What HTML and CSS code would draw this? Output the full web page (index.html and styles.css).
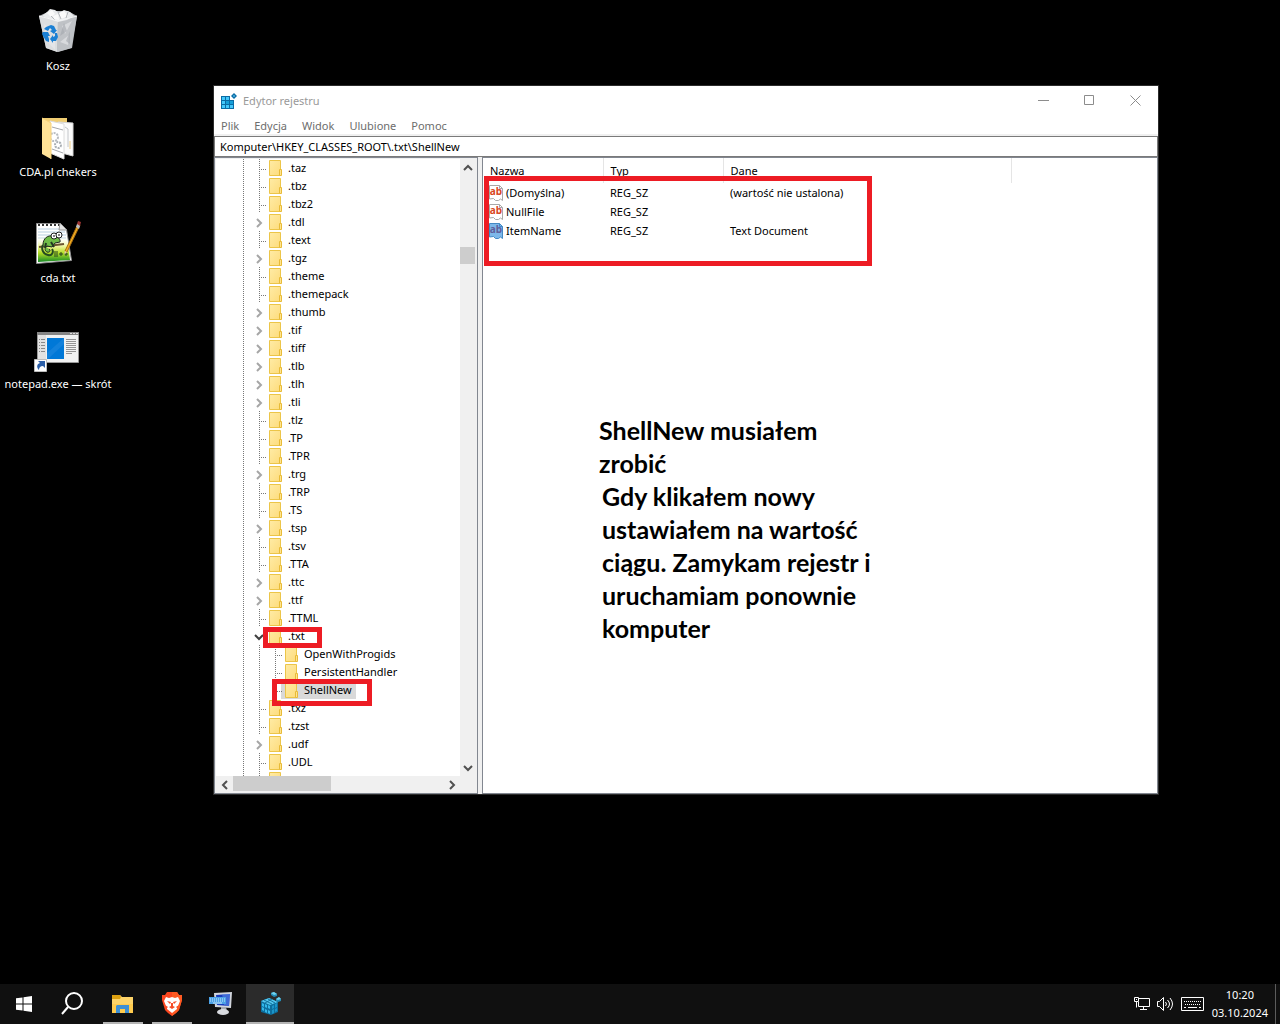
FILE: index.html
```
<!DOCTYPE html>
<html lang="pl">
<head>
  <meta charset="UTF-8" />
  <meta name="viewport" content="width=device-width, initial-scale=1.0"/>
  <title>Edytor rejestru</title>
  <link rel="stylesheet" href="styles.css">
</head>
<body>
  <!-- shared icons -->
  <svg class="sprite" aria-hidden="true">
    <defs>
      <linearGradient id="folderFill" x1="0" y1="0" x2="1" y2="1">
        <stop offset="0" stop-color="#ffeba6"/>
        <stop offset="1" stop-color="#fddc7c"/>
      </linearGradient>
      <symbol id="folder" viewBox="0 0 13 16">
        <path d="M.5 .5h11v15H.5z" fill="url(#folderFill)" stroke="#ecc548"/>
        <path d="M10.5 9.500h2v6h-2z" fill="#ffe48f" stroke="#e8bb38"/>
      </symbol>
      <symbol id="chev-right" viewBox="0 0 8 10">
        <path d="M2 1l4 4-4 4" fill="none" stroke="currentColor" stroke-width="2"/>
      </symbol>
      <symbol id="chev-left" viewBox="0 0 8 10">
        <path d="M6 1L2 5l4 4" fill="none" stroke="currentColor" stroke-width="2"/>
      </symbol>
      <symbol id="chev-down" viewBox="0 0 10 8">
        <path d="M1 2l4 4 4-4" fill="none" stroke="currentColor" stroke-width="2"/>
      </symbol>
      <symbol id="chev-up" viewBox="0 0 10 8">
        <path d="M1 6l4-4 4 4" fill="none" stroke="currentColor" stroke-width="2"/>
      </symbol>
      <symbol id="page" viewBox="0 0 16 16">
        <path d="M1.500.5h10l3 3v12l-2-1.500-2 1.500h-3l-2-2-4 .5z" fill="#fff" stroke="#a8a8a8"/>
        <path d="M11.500.5v3h3" fill="none" stroke="#a8a8a8"/>
      </symbol>
      <symbol id="page-selected" viewBox="0 0 16 16">
        <path d="M1.500.5h10l3 3v12l-2-1.500-2 1.500h-3l-2-2-4 .5z" fill="#7db8ea" stroke="#4389c4"/>
        <path d="M11.500.5v3h3" fill="none" stroke="#4389c4"/>
      </symbol>
    </defs>
  </svg>

  <main class="desktop">
    <div class="shortcuts">
      <button class="shortcut">
        <svg width="48" height="48" viewBox="0 0 48 48">
          <path d="M5 9L16 4h18l9 5-5 32-14 4-12-4z" fill="#b9bcc0"/>
          <path d="M5 9l19 5-1 31-11-4z" fill="#dcdee0"/>
          <path d="M24 14l19-5-6 32-14 4z" fill="#bfc2c6"/>
          <path d="M8 9l5-4 3-3 5 1 4 3 5-3 6 2 4 4-7 4-9 2z" fill="#e9ebed"/>
          <path d="M13 6l5-3 3 4-4 3zM25 6l5-2 4 5-7 3zM19 9l5-2 1 6-5-1z" fill="#fafafa"/>
          <path d="M17 9l4 4M24 5l3 7M34 5l-2 6" stroke="#b4b7bb" fill="none"/>
          <path d="M10 17l8 5-7 7zM13 34l8-4v13zM28 19l10-5-7 13zM26 35l9-7-1 10z" fill="#e9eaec" opacity=".6"/>
          <path d="M30 16l3 8-7 5zM36 24l-4 10 4 3z" fill="#a3a7ad" opacity=".6"/>
          <path d="M5 9l19 5 19-5" stroke="#f4f5f6" fill="none"/>
          <g fill="#1b80d4">
            <path d="M12 20l5-2 3 1 2 4 1 0-3 4-4-3 2-1-2-2-2 3-4-2z"/>
            <path d="M21 26l2 0 1 4-2 4-3 0 0 2-3-4 3-4 0 2 2-1z"/>
            <path d="M9 25l5 0 2 4-2 0 1 3 0 3-3-1-3-5-1-2z"/>
          </g>
        </svg>
        <span>Kosz</span>
      </button>
      <button class="shortcut">
        <svg width="48" height="48" viewBox="0 0 48 48">
          <path d="M8 5h25v36H8z" fill="#f0cd72"/>
          <path d="M24 9l15 1v33l-15-4z" fill="#fbfbfb" stroke="#d5d5d5"/>
          <path d="M31 14l3 2v18" fill="none" stroke="#c3c6ca"/>
          <path d="M16 8l14 3v35l-14-6z" fill="#fff" stroke="#dcdcdc"/>
          <path d="M18 14l11 3M18 36l11 4" stroke="#a4a6aa"/>
          <circle cx="20" cy="24" r="4" fill="none" stroke="#b8bcc0" stroke-width="2" stroke-dasharray="2 1"/>
          <circle cx="24" cy="32" r="3" fill="none" stroke="#aaafb4" stroke-width="2" stroke-dasharray="2 1"/>
          <path d="M8 5l9 5v36l-9-5z" fill="#ffe297"/>
          <path d="M8 5l9 5v36" fill="none" stroke="#f7d37c"/>
          <path d="M36 28v8" stroke="#f1ce83"/>
        </svg>
        <span>CDA.pl chekers</span>
      </button>
      <button class="shortcut">
        <svg width="48" height="48" viewBox="0 0 48 48">
          <defs>
            <linearGradient id="grass" x1="0" y1="0" x2="0" y2="1">
              <stop offset="0" stop-color="#fff" stop-opacity="0"/>
              <stop offset=".4" stop-color="#eef59a"/>
              <stop offset=".65" stop-color="#b4de26"/>
              <stop offset="1" stop-color="#168a26"/>
            </linearGradient>
          </defs>
          <path d="M2.500 4.500h24l6 6 5 31-35 3z" fill="#fff" stroke="#8e8e8e"/>
          <path d="M4 10h24M4 13h27M4 16h28M4 19h28" stroke="#b9cfe0"/>
          <path d="M4 17h29l3 24-32 2z" fill="url(#grass)"/>
          <path d="M4 6h22" stroke="#333" stroke-width="2" stroke-dasharray="2 2"/>
          <path d="M26 4l-1 7 8 0z" fill="#e5e5e5" stroke="#999"/>
          <path d="M5 28l25-3" stroke="#6c5530" stroke-width="2"/>
          <path d="M9 26c0-7 5-10 10-9 4 0 8 3 7 6l-5 1-3 4-5-1c-3 2-2 5 0 6 3 1 4-2 2-3" fill="#70bd48" stroke="#202820"/>
          <path d="M9 26c-2 4 0 9 5 10 4 1 6-3 4-6" fill="none" stroke="#244a20" stroke-width="2"/>
          <path d="M17 23l3 5M12 24l-1 5" stroke="#203820" stroke-width="2"/>
          <circle cx="20" cy="17" r="3" fill="#fff" stroke="#222"/>
          <circle cx="25" cy="16" r="3" fill="#fff" stroke="#222"/>
          <path d="M20 16v2M25 15v2" stroke="#000"/>
          <path d="M21 32v6M23 32v6M25 35h4M30 35h4M27 33v4M32 33v4" stroke="#244020"/>
          <path d="M44 5l2 1-13 27-2-1z" fill="#f3ad20" stroke="#a36a11"/>
          <path d="M43 5l1-3 3 1-1 4z" fill="#9b3534"/>
          <path d="M42 8l3 2 1-3-3-2z" fill="#b9bdc3"/>
          <path d="M31 32l2 1-3 3z" fill="#e8cfa0"/>
        </svg>
        <span>cda.txt</span>
      </button>
      <button class="shortcut">
        <svg width="48" height="48" viewBox="0 0 48 48">
          <path d="M3.500 7.500h41v30h-41z" fill="#f1f2f2" stroke="#999"/>
          <path d="M3 7h42v3H3z" fill="#858585"/>
          <path d="M36 8.500h2M39 8.500h2M42 8.500h2" stroke="#ddd"/>
          <path d="M4 10h8v27H4z" fill="#e2e2e2"/>
          <path d="M5 14.500h1M7 14.500h4M5 17.500h1M7 17.500h4M5 20.500h1M7 20.500h4M5 23.500h1M7 23.500h4M5 26.500h1M7 26.500h4" stroke="#8a8a8a"/>
          <path d="M13 13h17v21H13z" fill="#0078d7"/>
          <path d="M13 28L30 13v6L14 34h-1z" fill="#2389df" opacity=".5"/>
          <path d="M32 14.500h10M32 16.500h10M32 18.500h10M32 20.500h10M32 22.500h10M32 24.500h10M32 26.500h10M32 28.500h6" stroke="#949494"/>
          <path d="M.5 34.500h12v12H.5z" fill="#fff" stroke="#bcbcbc"/>
          <path d="M4 36h7v7l-2-2c-3 0-4 2-4 4-3-3-2-6 1-7z" fill="#2c5fa8"/>
        </svg>
        <span>notepad.exe — skrót</span>
      </button>
    </div>

    <section class="window">
      <header class="titlebar">
        <svg width="16" height="16" viewBox="0 0 16 16">
          <path d="M0 3h9v4h4v9H0z" fill="#0a6ca5"/>
          <path d="M1 4h3v3H1zM5 4h3v3H5zM1 8h3v3H1zM1 12h3v3H1zM5 12h3v3H5zM9 12h3v3H9z" fill="#43c8fb"/>
          <path d="M5 8h3v3H5zM9 8h3v3H9z" fill="#159fd9"/>
          <path d="M13 0l3 3-3 3-3-3z" fill="#0a6ca5"/>
          <path d="M13 2l1 1-1 1-1-1z" fill="#6bd3ff"/>
        </svg>
        <h1>Edytor rejestru</h1>
        <div class="window-controls">
          <button aria-label="Minimalizuj"><svg width="11" height="11"><path d="M0 5.500h11"/></svg></button>
          <button aria-label="Maksymalizuj"><svg width="11" height="11"><path d="M.5.5h9v9h-9z"/></svg></button>
          <button aria-label="Zamknij"><svg width="11" height="11"><path d="M.5.500l10 10M10.500.500l-10 10"/></svg></button>
        </div>
      </header>

      <nav class="menubar">
        <button>Plik</button>
        <button>Edycja</button>
        <button>Widok</button>
        <button>Ulubione</button>
        <button>Pomoc</button>
      </nav>

      <input class="address" type="text" aria-label="Adres" value="Komputer\HKEY_CLASSES_ROOT\.txt\ShellNew" />

      <div class="panes">
        <div class="tree-pane">
          <ul class="tree">
            <li><div class="row"><i class="branch"></i><svg class="folder"><use href="#folder"/></svg><span>.taz</span></div></li>
            <li><div class="row"><i class="branch"></i><svg class="folder"><use href="#folder"/></svg><span>.tbz</span></div></li>
            <li><div class="row"><i class="branch"></i><svg class="folder"><use href="#folder"/></svg><span>.tbz2</span></div></li>
            <li><div class="row"><button class="expander" aria-label="Rozwiń"><svg width="8" height="10"><use href="#chev-right"/></svg></button><svg class="folder"><use href="#folder"/></svg><span>.tdl</span></div></li>
            <li><div class="row"><i class="branch"></i><svg class="folder"><use href="#folder"/></svg><span>.text</span></div></li>
            <li><div class="row"><button class="expander" aria-label="Rozwiń"><svg width="8" height="10"><use href="#chev-right"/></svg></button><svg class="folder"><use href="#folder"/></svg><span>.tgz</span></div></li>
            <li><div class="row"><i class="branch"></i><svg class="folder"><use href="#folder"/></svg><span>.theme</span></div></li>
            <li><div class="row"><i class="branch"></i><svg class="folder"><use href="#folder"/></svg><span>.themepack</span></div></li>
            <li><div class="row"><button class="expander" aria-label="Rozwiń"><svg width="8" height="10"><use href="#chev-right"/></svg></button><svg class="folder"><use href="#folder"/></svg><span>.thumb</span></div></li>
            <li><div class="row"><button class="expander" aria-label="Rozwiń"><svg width="8" height="10"><use href="#chev-right"/></svg></button><svg class="folder"><use href="#folder"/></svg><span>.tif</span></div></li>
            <li><div class="row"><button class="expander" aria-label="Rozwiń"><svg width="8" height="10"><use href="#chev-right"/></svg></button><svg class="folder"><use href="#folder"/></svg><span>.tiff</span></div></li>
            <li><div class="row"><button class="expander" aria-label="Rozwiń"><svg width="8" height="10"><use href="#chev-right"/></svg></button><svg class="folder"><use href="#folder"/></svg><span>.tlb</span></div></li>
            <li><div class="row"><button class="expander" aria-label="Rozwiń"><svg width="8" height="10"><use href="#chev-right"/></svg></button><svg class="folder"><use href="#folder"/></svg><span>.tlh</span></div></li>
            <li><div class="row"><button class="expander" aria-label="Rozwiń"><svg width="8" height="10"><use href="#chev-right"/></svg></button><svg class="folder"><use href="#folder"/></svg><span>.tli</span></div></li>
            <li><div class="row"><i class="branch"></i><svg class="folder"><use href="#folder"/></svg><span>.tlz</span></div></li>
            <li><div class="row"><i class="branch"></i><svg class="folder"><use href="#folder"/></svg><span>.TP</span></div></li>
            <li><div class="row"><i class="branch"></i><svg class="folder"><use href="#folder"/></svg><span>.TPR</span></div></li>
            <li><div class="row"><button class="expander" aria-label="Rozwiń"><svg width="8" height="10"><use href="#chev-right"/></svg></button><svg class="folder"><use href="#folder"/></svg><span>.trg</span></div></li>
            <li><div class="row"><i class="branch"></i><svg class="folder"><use href="#folder"/></svg><span>.TRP</span></div></li>
            <li><div class="row"><i class="branch"></i><svg class="folder"><use href="#folder"/></svg><span>.TS</span></div></li>
            <li><div class="row"><button class="expander" aria-label="Rozwiń"><svg width="8" height="10"><use href="#chev-right"/></svg></button><svg class="folder"><use href="#folder"/></svg><span>.tsp</span></div></li>
            <li><div class="row"><i class="branch"></i><svg class="folder"><use href="#folder"/></svg><span>.tsv</span></div></li>
            <li><div class="row"><i class="branch"></i><svg class="folder"><use href="#folder"/></svg><span>.TTA</span></div></li>
            <li><div class="row"><button class="expander" aria-label="Rozwiń"><svg width="8" height="10"><use href="#chev-right"/></svg></button><svg class="folder"><use href="#folder"/></svg><span>.ttc</span></div></li>
            <li><div class="row"><button class="expander" aria-label="Rozwiń"><svg width="8" height="10"><use href="#chev-right"/></svg></button><svg class="folder"><use href="#folder"/></svg><span>.ttf</span></div></li>
            <li><div class="row"><i class="branch"></i><svg class="folder"><use href="#folder"/></svg><span>.TTML</span></div></li>
            <li>
              <div class="row"><button class="expander open" aria-label="Zwiń"><svg width="10" height="8"><use href="#chev-down"/></svg></button><svg class="folder"><use href="#folder"/></svg><span>.txt</span></div>
              <ul class="children">
                <li><div class="row"><i class="branch"></i><svg class="folder"><use href="#folder"/></svg><span>OpenWithProgids</span></div></li>
                <li><div class="row"><i class="branch"></i><svg class="folder"><use href="#folder"/></svg><span>PersistentHandler</span></div></li>
                <li><div class="row selected"><i class="branch last"></i><svg class="folder"><use href="#folder"/></svg><span>ShellNew</span></div></li>
              </ul>
            </li>
            <li><div class="row"><i class="branch"></i><svg class="folder"><use href="#folder"/></svg><span>.txz</span></div></li>
            <li><div class="row"><i class="branch"></i><svg class="folder"><use href="#folder"/></svg><span>.tzst</span></div></li>
            <li><div class="row"><button class="expander" aria-label="Rozwiń"><svg width="8" height="10"><use href="#chev-right"/></svg></button><svg class="folder"><use href="#folder"/></svg><span>.udf</span></div></li>
            <li><div class="row"><i class="branch"></i><svg class="folder"><use href="#folder"/></svg><span>.UDL</span></div></li>
            <li><div class="row"><i class="branch"></i><svg class="folder"><use href="#folder"/></svg></div></li>
          </ul>
          <div class="scroll-v">
            <button aria-label="W górę"><svg width="10" height="8"><use href="#chev-up"/></svg></button>
            <div class="track"><div class="thumb"></div></div>
            <button aria-label="W dół"><svg width="10" height="8"><use href="#chev-down"/></svg></button>
          </div>
          <div class="scroll-h">
            <button aria-label="W lewo"><svg width="8" height="10"><use href="#chev-left"/></svg></button>
            <div class="track"><div class="thumb"></div></div>
            <button aria-label="W prawo"><svg width="8" height="10"><use href="#chev-right"/></svg></button>
          </div>
        </div>

        <div class="values-pane">
          <table class="values">
            <colgroup>
              <col class="col-name"><col class="col-type"><col class="col-data"><col>
            </colgroup>
            <thead>
              <tr><th>Nazwa</th><th>Typ</th><th>Dane</th><td></td></tr>
            </thead>
            <tbody>
              <tr>
                <td><div class="name"><span class="value-icon"><svg width="16" height="16"><use href="#page"/></svg><b>ab</b></span>(Domyślna)</div></td>
                <td>REG_SZ</td><td>(wartość nie ustalona)</td><td></td>
              </tr>
              <tr>
                <td><div class="name"><span class="value-icon"><svg width="16" height="16"><use href="#page"/></svg><b>ab</b></span>NullFile</div></td>
                <td>REG_SZ</td><td></td><td></td>
              </tr>
              <tr>
                <td><div class="name"><span class="value-icon active"><svg width="16" height="16"><use href="#page-selected"/></svg><b>ab</b></span>ItemName</div></td>
                <td>REG_SZ</td><td>Text Document</td><td></td>
              </tr>
            </tbody>
          </table>
          <div class="note">
            <p>ShellNew musiałem<br>zrobić</p>
            <p class="indent">Gdy klikałem nowy<br>ustawiałem na wartość<br>ciągu. Zamykam rejestr i<br>uruchamiam ponownie<br>komputer</p>
          </div>
        </div>
      </div>

      <div class="mark mark-values"></div>
      <div class="mark mark-txt"></div>
      <div class="mark mark-shellnew"></div>
    </section>
  </main>

  <footer class="taskbar">
    <button class="task" aria-label="Start">
      <svg width="16" height="16" viewBox="0 0 16 16"><path d="M0 2.300L6.500 1.400v6.100H0zM7.500 1.200L16 0v7.500H7.500zM0 8.500h6.500v6.100L0 13.700zM7.500 8.500H16V16l-8.500-1.200z" fill="#fff"/></svg>
    </button>
    <button class="task" aria-label="Wyszukaj">
      <svg width="24" height="24" viewBox="0 0 24 24"><circle cx="14" cy="9" r="8" fill="none" stroke="#fff" stroke-width="2"/><path d="M8 15l-6 7" stroke="#fff" stroke-width="2"/></svg>
    </button>
    <div class="apps">
      <button class="task running" aria-label="Eksplorator plików">
        <svg width="24" height="24" viewBox="0 0 24 24">
          <path d="M1 3h8l2 2h11v16H1z" fill="#fdd469"/>
          <path d="M1 3h8l1 2-1 2H1z" fill="#dca010"/>
          <path d="M1 12h21v9H1z" fill="#ffcb4e"/>
          <path d="M5 21v-7l1-1h12v8h-4v-4H9v4z" fill="#3e90d4"/>
        </svg>
      </button>
      <button class="task running" aria-label="Brave">
        <svg width="24" height="24" viewBox="0 0 24 24">
          <path d="M7 0h10l2 3 3 0 0 5-3 10-3 3-4 3-4-3-3-3L2 8V3h3z" fill="#fb4720"/>
          <path d="M12 0h5l2 3h3v5l-3 10-3 3-4 3z" fill="#ff5a22"/>
          <path d="M6 5l3 1 3-1 3 1 3-1 2 4-2 5-1 1 0 2-5 4-5-4 0-2-1-1-2-5z" fill="#fff"/>
          <path d="M7 9l4 1-1 2zM17 9l-4 1 1 2zM11 11h2v3l2 1-3 2-3-2 2-1zM5 13l3 2-1 1zM19 13l-3 2 1 1z" fill="#f64b25"/>
        </svg>
      </button>
      <button class="task" aria-label="Klawiatura ekranowa">
        <svg width="24" height="24" viewBox="0 0 24 24">
          <path d="M5 1l18-1-1 16-16-1z" fill="#d1d5dc"/>
          <path d="M7 3l14-1-1 12-12-1z" fill="#183cbc"/>
          <path d="M13 2l8 0-1 12-5-1z" fill="#5b88e8" opacity=".6"/>
          <path d="M12 15h5l1 4h-6z" fill="#a7abb2"/>
          <ellipse cx="14" cy="20" rx="6" ry="3" fill="#d9dbe0"/>
          <path d="M0 5h17v7H0z" fill="#4ca2e6"/>
          <path d="M1 7h15M1 9h15" stroke="#c9e8ff" stroke-dasharray="1 1"/>
          <path d="M4 11h9" stroke="#c9e8ff"/>
        </svg>
      </button>
      <button class="task current" aria-label="Edytor rejestru">
        <svg width="24" height="24" viewBox="0 0 24 24">
          <path d="M3 9l8-3 9 4v10l-7 3-10-3z" fill="#0d6e9d"/>
          <path d="M3 9l8-3 9 4-8 3z" fill="#54c8f0"/>
          <path d="M4 11l2 1v3l-2-1zM7 12l2 1v3l-2-1zM10 13l2 1v3l-2-1zM4 15l2 1v3l-2-1zM7 17l2 1v3l-2-1zM10 18l2 1v3l-2-1z" fill="#33b7e9"/>
          <path d="M14 14l2-1v3l-2 1zM17 12l2-1v4l-2 1zM14 18l2-1v4l-2 1zM17 17l2-1v3l-2 1z" fill="#1b94c8"/>
          <path d="M6 8l8 4M10 7l7 4M7 11l7-4" stroke="#15749f"/>
          <path d="M13 1l3-1 3 2v2l-3 1-3-2z" fill="#238db8"/>
          <path d="M13 1l3-1 3 2-3 1z" fill="#72d4ef"/>
          <path d="M18 7l3-2 2 2v2l-3 1-2-1z" fill="#238db8"/>
          <path d="M18 7l3-2 2 2-3 1z" fill="#72d4ef"/>
        </svg>
      </button>
    </div>
    <div class="tray">
      <button aria-label="Sieć"><svg width="16" height="14" viewBox="0 0 16 14"><path d="M5 1.500h10.500v8H4.500V5M.5.500h4v4h-4zM2.500 4v6.500M9.500 10v3M6 12.500h7M2 2.500h1" fill="none" stroke="#fff"/></svg></button>
      <button aria-label="Głośność"><svg width="17" height="14" viewBox="0 0 17 14"><path d="M.5 4.500h2l4-4v13l-4-4h-2zM8.500 5q2 2 0 4M10.500 3q4 4 0 8M13 1q5 6 0 12" fill="none" stroke="#fff"/></svg></button>
      <button aria-label="Klawiatura"><svg width="23" height="14" viewBox="0 0 23 14"><path d="M.5.500h22v13H.5z" fill="none" stroke="#fff"/><path d="M3 4.500h17M4 7.500h16" stroke="#fff" stroke-dasharray="1 1"/><path d="M3 10.500h2M7 10.500h9M18 10.500h2" stroke="#fff"/></svg></button>
      <button class="clock"><time>10:20</time><time>03.10.2024</time></button>
      <button class="show-desktop" aria-label="Pokaż pulpit"></button>
    </div>
  </footer>
</body>
</html>
```
FILE: styles.css
```
* {
  box-sizing: border-box;
  margin: 0;
  padding: 0;
}

body {
  display: flex;
  flex-direction: column;
  min-height: 100vh;
  background-color: #000;
  color: #000;
  font-family: "Noto Sans", "Open Sans", sans-serif;
  font-size: 11px;
}

button {
  border: none;
  background: none;
  color: inherit;
  font: inherit;
}

svg {
  display: block;
  flex-shrink: 0;
}

.sprite {
  position: absolute;
  width: 0;
  height: 0;
}

.desktop {
  position: relative;
  flex: 1;
}

/* desktop shortcuts */
.shortcuts {
  display: flex;
  flex-direction: column;
  width: 116px;
  padding-top: 7px;
}

.shortcut {
  display: flex;
  flex-direction: column;
  align-items: center;
  height: 106px;
  color: #fff;
  line-height: 22px;
  white-space: nowrap;
}

/* registry editor window */
.window {
  position: absolute;
  top: 86px;
  right: 122px;
  bottom: 190px;
  left: 214px;
  display: flex;
  flex-direction: column;
  background-color: #fff;
  box-shadow: 0 0 0 1px #2b2b2b;
}

.titlebar {
  display: flex;
  align-items: center;
  height: 29px;
  padding-left: 7px;
  gap: 6px;
  color: #999;
}

.titlebar h1 {
  flex: 1;
  font-size: 11px;
  font-weight: normal;
}

.window-controls {
  display: flex;
}

.window-controls button {
  display: flex;
  justify-content: center;
  align-items: center;
  width: 46px;
  height: 28px;
}

.window-controls path {
  fill: none;
  stroke: #8c8c8c;
}

.menubar {
  display: flex;
  gap: 15px;
  height: 21px;
  padding: 2px 7px 0;
  border-bottom: 2px solid #f0f0f0;
  color: #6d6d6d;
}

.address {
  width: 100%;
  height: 21px;
  padding: 0 5px;
  border: 1px solid #7a7a7a;
  font: inherit;
  outline: none;
}

.panes {
  display: flex;
  flex: 1;
  gap: 4px;
  min-height: 0;
  background-color: #f0f0f0;
}

.tree-pane {
  display: grid;
  grid-template-columns: 1fr 16px;
  grid-template-rows: 1fr 16px;
  width: 264px;
  border: 1px solid #828790;
  padding: 1px;
}

/* tree */
.tree {
  min-height: 0;
  overflow: hidden;
  list-style: none;
  background-color: #fff;
  background-image: repeating-linear-gradient(#777 0 1px, #fff 1px 2px);
  background-repeat: no-repeat;
  background-size: 1px 100%;
  background-position: 27px 0;
}

.row {
  display: flex;
  align-items: center;
  height: 18px;
  padding-left: 35px;
  line-height: 18px;
}

.branch {
  width: 16px;
  height: 18px;
  background-image:
    repeating-linear-gradient(#777 0 1px, #fff 1px 2px),
    repeating-linear-gradient(to right, #777 0 1px, #fff 1px 2px);
  background-repeat: no-repeat;
  background-size: 1px 100%, 7px 1px;
  background-position: 8px 0, 8px 10px;
}

.branch.last {
  background-size: 1px 10px, 7px 1px;
}

.expander {
  display: flex;
  justify-content: center;
  align-items: end;
  width: 16px;
  height: 18px;
  padding-right: 1px;
  padding-bottom: 3px;
  color: #a6a6a6;
}

.expander.open {
  padding-bottom: 4px;
  color: #404040;
}

.folder {
  width: 13px;
  height: 16px;
  margin-left: 2px;
  margin-right: 4px;
}

.row span {
  padding: 0 4px 0 2px;
}

.children {
  list-style: none;
  background-image: repeating-linear-gradient(#777 0 1px, #fff 1px 2px);
  background-repeat: no-repeat;
  background-size: 1px 100%;
  background-position: 43px 0;
}

.children .row {
  padding-left: 51px;
}

.selected {
  width: fit-content;
  background: linear-gradient(#d9d9d9, #d9d9d9) no-repeat 65px 0;
}

/* scrollbars */
.scroll-v,
.scroll-h {
  display: flex;
  background-color: #f0f0f0;
  color: #505050;
}

.scroll-v {
  flex-direction: column;
}

.scroll-v button,
.scroll-h button {
  display: flex;
  justify-content: center;
  align-items: center;
  width: 17px;
  height: 17px;
}

.scroll-v button {
  width: 15px;
}

.track {
  display: flex;
  flex: 1;
}

.scroll-v .track {
  flex-direction: column;
}

.scroll-v .thumb {
  width: 15px;
  height: 17px;
  margin-top: 71px;
  background-color: #cdcdcd;
}

.scroll-h .thumb {
  width: 98px;
  height: 15px;
  background-color: #cdcdcd;
}

/* values */
.values-pane {
  flex: 1;
  min-width: 0;
  border: 1px solid #828790;
  background-color: #fff;
}

.values {
  width: 100%;
  table-layout: fixed;
  border-collapse: collapse;
  line-height: 19px;
}

.col-name {
  width: 120px;
}

.col-type {
  width: 120px;
}

.col-data {
  width: 288px;
}

.values th {
  height: 25px;
  padding: 0 0 0 7px;
  border-right: 1px solid #e5e5e5;
  font-weight: normal;
  text-align: left;
}

.values tbody td {
  height: 19px;
  padding-left: 7px;
  white-space: nowrap;
}

.values tbody td:first-child {
  padding-left: 5px;
}

.name {
  display: flex;
  align-items: center;
  gap: 2px;
}

.value-icon {
  display: grid;
}

.value-icon svg,
.value-icon b {
  grid-area: 1 / 1;
}

.value-icon b {
  color: #d8481f;
  font-size: 10px;
  line-height: 12px;
  text-align: center;
}

.value-icon.active b {
  color: #5f5f9c;
}

.note {
  padding: 174px 0 0 116px;
  font-family: Lato, sans-serif;
  font-size: 25px;
  font-weight: bold;
  line-height: 33px;
}

.note .indent {
  padding-left: 3px;
}

/* red frames drawn over the window */
.mark {
  position: absolute;
  border: 5px solid #ed1c24;
}

.mark-values {
  top: 90px;
  left: 270px;
  width: 388px;
  height: 90px;
}

.mark-txt {
  top: 541px;
  left: 49px;
  width: 59px;
  height: 21px;
}

.mark-shellnew {
  top: 593px;
  left: 58px;
  width: 100px;
  height: 27px;
}

/* taskbar */
.taskbar {
  display: flex;
  height: 40px;
  background-color: #101010;
  color: #fff;
}

.task {
  display: flex;
  justify-content: center;
  align-items: center;
  width: 48px;
  height: 40px;
}

.apps {
  display: flex;
  gap: 1px;
  margin-left: 3px;
}

.running {
  background: linear-gradient(#b4b4b4, #b4b4b4) no-repeat center bottom / 40px 2px;
}

.current {
  border-bottom: 2px solid #b4b4b4;
  padding-top: 2px;
  background-color: #2b2b2b;
}

.tray {
  display: flex;
  align-items: center;
  gap: 7px;
  margin-left: auto;
}

.clock {
  display: flex;
  flex-direction: column;
  align-items: center;
  margin-left: 1px;
  line-height: 18px;
}

.show-desktop {
  width: 5px;
  height: 40px;
  border-left: 1px solid #5c5c5c;
}
```
